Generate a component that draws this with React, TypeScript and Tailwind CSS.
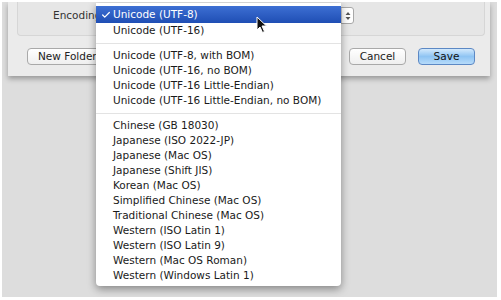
import { Check } from 'lucide-react';

const groups = [
  ['Unicode (UTF-8)', 'Unicode (UTF-16)'],
  [
    'Unicode (UTF-8, with BOM)',
    'Unicode (UTF-16, no BOM)',
    'Unicode (UTF-16 Little-Endian)',
    'Unicode (UTF-16 Little-Endian, no BOM)',
  ],
  [
    'Chinese (GB 18030)',
    'Japanese (ISO 2022-JP)',
    'Japanese (Mac OS)',
    'Japanese (Shift JIS)',
    'Korean (Mac OS)',
    'Simplified Chinese (Mac OS)',
    'Traditional Chinese (Mac OS)',
    'Western (ISO Latin 1)',
    'Western (ISO Latin 9)',
    'Western (Mac OS Roman)',
    'Western (Windows Latin 1)',
  ],
];

function Cursor() {
  return (
    <svg width="12" height="18" viewBox="0 0 12 18" className="absolute left-[160px] top-[10px]">
      <path d="M1 1 L1 14 L4 11 L6.5 16.5 L8.5 15.5 L6 10 L10.5 10 Z" fill="#111" stroke="#fff" strokeWidth="1" strokeLinejoin="round" />
    </svg>
  );
}

export default function App() {
  return (
    <div className="w-[501px] h-[300px] bg-white pt-[2px] pl-[2px] pr-[4px] pb-[3px] font-['DejaVu_Sans',sans-serif] text-[10.5px] text-[#1a1a1a]">
      <div className="relative h-full bg-[#dddddd] overflow-hidden">
        {/* save sheet */}
        <div className="ml-[6px] mr-[7px] h-[74px] bg-[#ebebeb] shadow-[0_3px_5px_rgba(0,0,0,0.3)] flex flex-col">
          <div className="ml-[9px] mr-[5px] h-[34px] bg-[#e6e6e6] border border-t-0 border-[#d6d6d6] rounded-b-[4px] flex items-start pt-[5px]">
            <span className="w-[79px] pl-[35px] whitespace-nowrap text-[#333] leading-[17px]">Encoding:</span>
            <div className="ml-[2px] w-[255px] h-[17px] bg-white border border-[#a8a8a8] rounded-[3px] flex justify-end">
              <div className="w-[12px] h-full border-l border-[#cfcfcf] flex items-center justify-center">
                <svg width="6" height="10" viewBox="0 0 6 10">
                  <path d="M0.5 4 L3 1 L5.5 4 Z M0.5 6 L3 9 L5.5 6 Z" fill="#555" />
                </svg>
              </div>
            </div>
          </div>
          <div className="flex items-center mt-[12px] pl-[19px] pr-[15px]">
            <button className="h-[17px] px-[10px] bg-linear-to-b from-white to-[#efefef] border border-[#a9a9a9] rounded-[4px] leading-none text-[#222]">
              New Folder
            </button>
            <div className="flex-1" />
            <button className="w-[57px] h-[17px] bg-linear-to-b from-white to-[#efefef] border border-[#a9a9a9] rounded-[4px] leading-none text-[#222]">
              Cancel
            </button>
            <button className="ml-[12px] w-[57px] h-[17px] bg-linear-to-b from-[#d3e9fc] via-[#8fc4f3] to-[#b6dbfa] border border-[#5c88c4] rounded-[4px] leading-none text-[#111]">
              Save
            </button>
          </div>
        </div>

        {/* encoding popup menu */}
        <div className="absolute left-[94px] top-[1px] w-[245px] bg-white rounded-b-[4px] shadow-[0_3px_9px_rgba(0,0,0,0.4)] py-[3px]">
          {groups.map((g, gi) => (
            <div key={gi}>
              {gi > 0 && (
                <div className="h-[10px] flex items-center">
                  <div className="w-full h-px bg-[#e3e3e3]" />
                </div>
              )}
              {g.map((label, i) => {
                const selected = gi === 0 && i === 0;
                return (
                  <div
                    key={label}
                    className={
                      selected
                        ? 'relative h-[17px] flex items-center pl-[17px] bg-linear-to-b from-[#3d6fd3] to-[#1f4eb4] text-white'
                        : 'h-[15px] flex items-center pl-[17px]'
                    }
                  >
                    {selected && <Check size={10} strokeWidth={3} className="absolute left-[5px] top-[4px] text-white" />}
                    {label}
                    {selected && <Cursor />}
                  </div>
                );
              })}
            </div>
          ))}
        </div>
      </div>
    </div>
  );
}
